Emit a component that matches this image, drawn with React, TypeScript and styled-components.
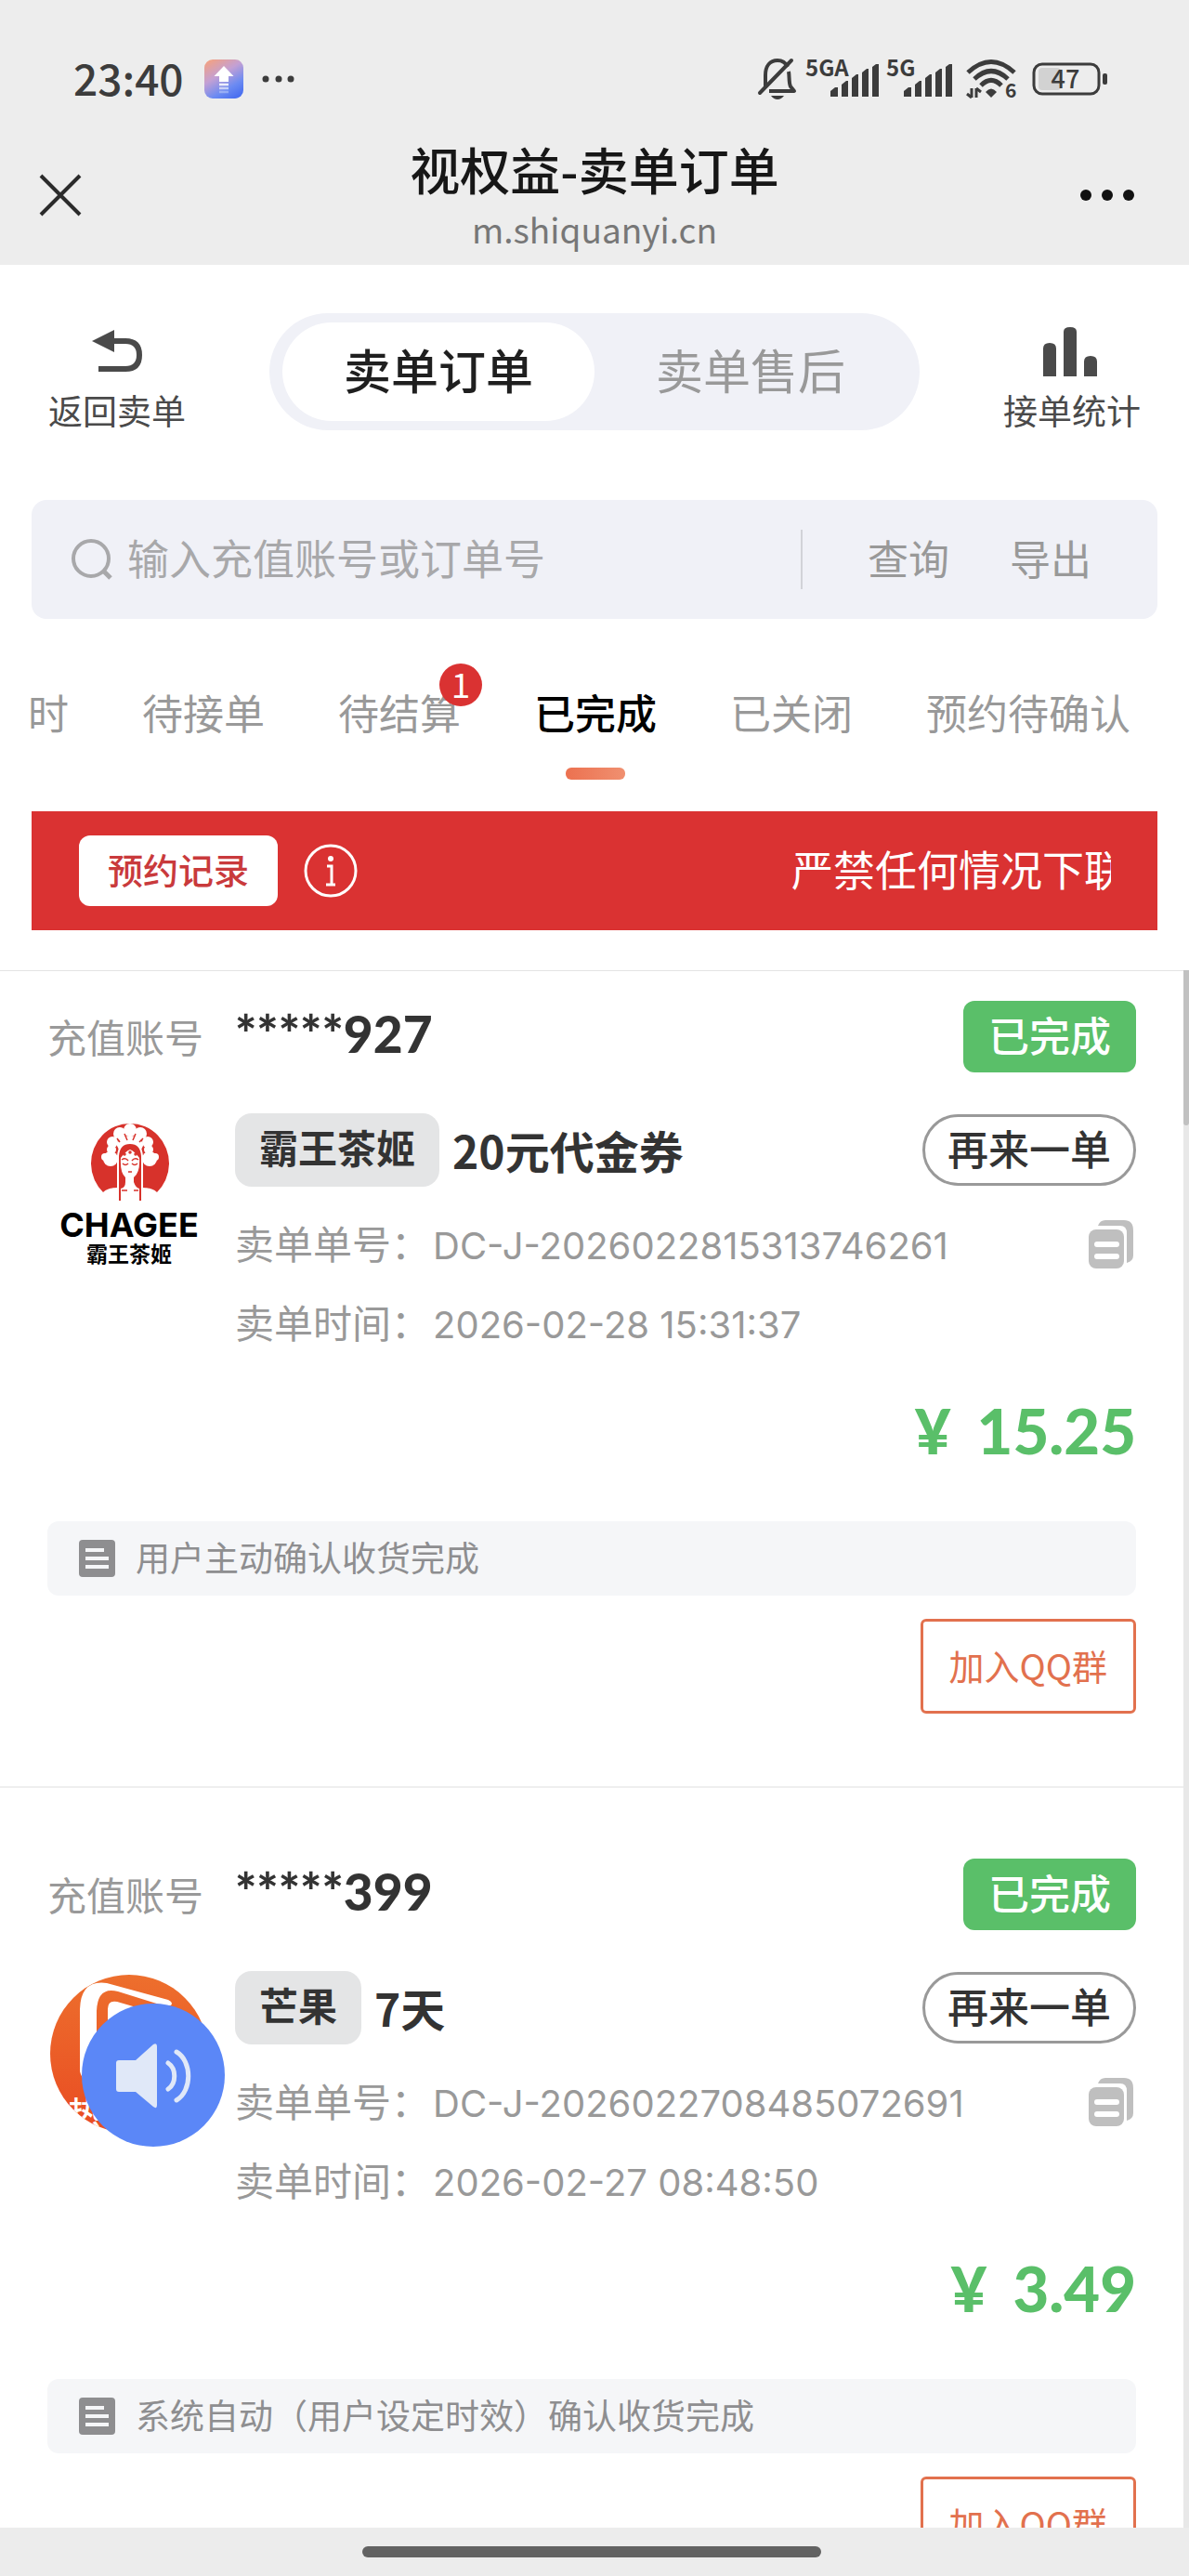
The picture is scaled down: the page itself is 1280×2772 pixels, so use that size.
import React from "react";
import styled, { createGlobalStyle, css } from "styled-components";

const GlobalStyle = createGlobalStyle`
  *, *::before, *::after { box-sizing: border-box; }
  body {
    margin: 0;
    background: #fff;
    font-family: "Noto Sans CJK SC", "Noto Sans", sans-serif;
    color: #333;
  }
  button, input {
    margin: 0;
    padding: 0;
    border: 0;
    background: none;
    font: inherit;
    color: inherit;
  }
  button { cursor: pointer; white-space: nowrap; }
  svg { display: block; flex: none; overflow: visible; }
`;

const Screen = styled.div`
  display: flex;
  flex-direction: column;
  height: 100vh;
  overflow: hidden;
`;

/* ---------- system bar and browser title ---------- */

const TopArea = styled.header`
  flex: none;
  background: #ededed;
`;

const StatusBar = styled.div`
  display: flex;
  align-items: center;
  justify-content: space-between;
  padding: 58px 87px 22px 79px;
  height: 134px;
`;

const StatusGroup = styled.div<{ $gap: number }>`
  display: flex;
  align-items: center;
  gap: ${(p) => p.$gap}px;
`;

const Clock = styled.span`
  padding-bottom: 4px;
  font-size: 46px;
  line-height: 54px;
  font-weight: 500;
  color: #3c3c3c;
`;

const NavBar = styled.div`
  display: grid;
  grid-template-columns: 1fr auto 1fr;
  align-items: center;
  height: 151px;
  padding: 0 42px;
`;

const NavButton = styled.button<{ $end?: boolean }>`
  justify-self: ${(p) => (p.$end ? "end" : "start")};
  padding-right: 16px;
`;

const Titles = styled.div`
  text-align: center;
`;

const Title = styled.h1`
  margin: 0;
  font-size: 54px;
  line-height: 72px;
  font-weight: 500;
  color: #171717;
`;

const Domain = styled.div`
  font-size: 37px;
  line-height: 56px;
  color: #777;
`;

/* ---------- toolbar ---------- */

const Toolbar = styled.div`
  display: flex;
  align-items: flex-end;
  justify-content: space-between;
  flex: none;
  padding: 52px 52px 0;
`;

const ToolButton = styled.button`
  display: flex;
  flex-direction: column;
  align-items: center;
  gap: 16px;
  font-size: 37px;
  line-height: 44px;
  color: #4a4a4a;
`;

const Segmented = styled.div`
  display: flex;
  flex: 0 1 700px;
  height: 126px;
  padding: 10px 14px;
  border-radius: 63px;
  background: #f0f1f7;
`;

const Segment = styled.button<{ $active?: boolean }>`
  flex: 1;
  padding-bottom: 6px;
  border-radius: 53px;
  font-size: 51px;
  color: #999;
  ${(p) =>
    p.$active &&
    css`
      background: #fff;
      color: #1f1f1f;
      font-weight: 500;
    `}
`;

/* ---------- search ---------- */

const SearchBox = styled.form`
  display: flex;
  align-items: center;
  flex: none;
  height: 128px;
  margin: 75px 34px 0;
  padding: 0 71px 0 43px;
  border-radius: 16px;
  background: #f0f1f7;
  font-size: 44px;
  line-height: 64px;
  color: #999;
`;

const SearchInput = styled.input`
  flex: 1;
  min-width: 0;
  height: 64px;
  margin-left: 16px;
  padding-bottom: 4px;
  outline: none;
  font-size: 45px;
  color: #333;
  &::placeholder { color: #a8a8aa; opacity: 1; }
`;

const SearchDivider = styled.span`
  width: 2px;
  height: 64px;
  margin-right: 70px;
  background: #d2d3d8;
`;

const SearchAction = styled.button`
  padding-bottom: 4px;
  & + & { margin-left: 65px; }
`;

/* ---------- order state tabs ---------- */

const Tabs = styled.nav`
  display: flex;
  flex: none;
  gap: 79px;
  padding: 68px 0 34px 30px;
  overflow: hidden;
`;

const Tab = styled.button<{ $active?: boolean }>`
  display: flex;
  flex: none;
  flex-direction: column;
  align-items: center;
  gap: 28px;
  font-size: 44px;
  line-height: 64px;
  color: #999;
  &::after {
    content: "";
    width: 64px;
    height: 13px;
    margin: 0 -10px;
    border-radius: 6px;
  }
  ${(p) =>
    p.$active &&
    css`
      color: #000;
      font-weight: 500;
      &::after { background: linear-gradient(90deg, #ec7150, #f09070); }
    `}
`;

const TabLabel = styled.span`
  position: relative;
`;

const Badge = styled.span`
  position: absolute;
  top: -20px;
  right: -23px;
  width: 46px;
  height: 46px;
  border-radius: 50%;
  background: #da3232;
  color: #fff;
  font-size: 37px;
  line-height: 42px;
  text-align: center;
`;

/* ---------- notice ---------- */

const Notice = styled.div`
  display: flex;
  align-items: center;
  flex: none;
  height: 128px;
  margin: 0 34px 43px;
  padding: 0 50px 0 51px;
  background: #da3232;
  color: #fff;
`;

const RecordButton = styled.button`
  height: 76px;
  padding: 0 31px 5px;
  margin-right: 28px;
  border-radius: 12px;
  background: #fff;
  color: #c93a3c;
  font-size: 38px;
  font-weight: 500;
`;

const Marquee = styled.div`
  display: flex;
  flex: 1;
  justify-content: flex-end;
  overflow: hidden;
`;

const MarqueeText = styled.span`
  width: 344px;
  overflow: hidden;
  white-space: nowrap;
  font-size: 45px;
  line-height: 64px;
  padding-bottom: 4px;
`;

/* ---------- orders ---------- */

const ListArea = styled.main`
  display: flex;
  flex: 1;
  min-height: 0;
  overflow: hidden;
`;

const Orders = styled.div`
  flex: 1;
  min-width: 0;
  border-top: 1px solid #e4e4e4;
`;

const ScrollTrack = styled.div`
  width: 6px;
  background: #e8e8e8;
`;

const ScrollThumb = styled.div`
  height: 167px;
  border-radius: 0 0 3px 3px;
  background: #c1c1c1;
`;

const Card = styled.article`
  padding: 76px 51px 78px;
  border-bottom: 2px solid #efefef;
  &:first-child { padding-top: 32px; }
`;

const CardHead = styled.div`
  display: flex;
  align-items: flex-start;
  justify-content: space-between;
  height: 77px;
`;

const AccountLine = styled.div`
  display: flex;
  align-items: baseline;
  padding-top: 2px;
`;

const AccountLabel = styled.span`
  width: 202px;
  font-size: 42px;
  line-height: 72px;
  color: #999;
`;

const Account = styled.strong`
  font-family: Lato, "Noto Sans CJK SC", sans-serif;
  font-size: 55px;
  line-height: 64px;
  font-weight: 900;
`;

const StateTag = styled.span`
  height: 77px;
  padding: 0 27px;
  border-radius: 12px;
  background: #5abf69;
  color: #fff;
  font-size: 44px;
  line-height: 72px;
  font-weight: 500;
`;

const CardBody = styled.div`
  display: grid;
  grid-template-columns: 174px 1fr;
  gap: 28px;
  margin-top: 44px;
`;

const LogoBox = styled.div`
  padding-top: 3px;
`;

const GoodsRow = styled.div`
  display: flex;
  align-items: center;
  height: 79px;
  margin-bottom: 19px;
`;

const BrandTag = styled.span`
  height: 79px;
  padding: 0 26px;
  border-radius: 18px;
  background: #e4e5e6;
  font-size: 42px;
  line-height: 72px;
  font-weight: 700;
`;

const GoodsName = styled.h2`
  flex: 1;
  margin: 0 0 0 14px;
  font-size: 48px;
  line-height: 79px;
  font-weight: 700;
`;

const AgainButton = styled.button`
  height: 77px;
  padding: 0 24px 5px;
  border: 3px solid #999;
  border-radius: 39px;
  font-size: 44px;
  line-height: 64px;
  font-weight: 500;
`;

const Detail = styled.div`
  display: flex;
  align-items: center;
  justify-content: space-between;
  height: 85px;
  padding-right: 3px;
  font-size: 42px;
  line-height: 85px;
  color: #999;
`;

const DetailValue = styled.span`
  margin-left: 3px;
  font-family: Inter, "Noto Sans CJK SC", sans-serif;
  font-size: 40px;
`;

const Price = styled.div`
  display: flex;
  justify-content: flex-end;
  gap: 28px;
  margin-top: 33px;
  font-family: Lato, "Noto Sans CJK SC", sans-serif;
  font-size: 67px;
  line-height: 80px;
  font-weight: 900;
  color: #5abf69;
`;

const Remark = styled.div`
  display: flex;
  align-items: center;
  gap: 22px;
  height: 80px;
  margin-top: 58px;
  padding: 0 34px;
  border-radius: 12px;
  background: #f5f6f8;
  font-size: 37px;
  line-height: 76px;
  color: #8e8e90;
`;

const RemarkText = styled.span`
  padding-bottom: 4px;
`;

const CardFoot = styled.div`
  display: flex;
  justify-content: flex-end;
  margin-top: 25px;
`;

const GroupButton = styled.button`
  height: 102px;
  padding: 0 28px 4px;
  border: 3px solid #e2714e;
  border-radius: 6px;
  color: #e2714e;
  font-size: 38px;
`;

/* ---------- overlay and gesture bar ---------- */

const VoiceButton = styled.button`
  position: fixed;
  left: 88px;
  bottom: 462px;
  width: 154px;
  height: 154px;
  border-radius: 50%;
  background: #5b87f7;
`;

const GestureBar = styled.footer`
  display: flex;
  align-items: center;
  justify-content: center;
  flex: none;
  height: 52px;
  padding-right: 6px;
  background: #ececec;
  &::after {
    content: "";
    width: 494px;
    height: 12px;
    border-radius: 6px;
    background: #626262;
  }
`;

/* ---------- drawings ---------- */

const AppIcon = () => (
  <svg width="42" height="42" viewBox="0 0 42 42" aria-hidden="true">
    <defs>
      <linearGradient id="appBg" x1="0.15" y1="0" x2="0.75" y2="1">
        <stop offset="0" stopColor="#f2a184" />
        <stop offset="0.4" stopColor="#c3a0d4" />
        <stop offset="0.75" stopColor="#6c8bf2" />
        <stop offset="1" stopColor="#4a70f0" />
      </linearGradient>
    </defs>
    <rect width="42" height="42" rx="9" fill="url(#appBg)" />
    <path d="M21 7l10.500 11h-5.500v6h-10v-6h-5.500z" fill="#fff" />
    <path d="M16 27h10" stroke="#fff" strokeWidth="2.500" opacity="0.850" />
    <path d="M16 31h10" stroke="#fff" strokeWidth="2.500" opacity="0.600" />
    <path d="M16 35h10" stroke="#fff" strokeWidth="2.500" opacity="0.300" />
  </svg>
);

const SmallDots = () => (
  <svg width="36" height="8" viewBox="2 0 36 8" fill="#3c3c3c" aria-hidden="true">
    <circle cx="4" cy="4" r="3.500" />
    <circle cx="18" cy="4" r="3.500" />
    <circle cx="31" cy="4" r="3.500" />
  </svg>
);

const MuteIcon = () => (
  <svg width="44" height="46" viewBox="0 0 44 46" fill="none" stroke="#3c3c3c" strokeWidth="4" aria-hidden="true">
    <path d="M9 31V19C9 9 14 3 22 3C27 3 31 6 33 10" />
    <path d="M34 15C35 20 34 27 36 31L40 36H13" strokeLinejoin="round" />
    <path d="M37 3L3 38" strokeLinecap="round" />
    <path d="M15 41H29Q26 45 22 45Q18 45 15 41Z" fill="#3c3c3c" stroke="none" />
  </svg>
);

const Signal = ({ label, width }: { label: string; width: number }) => (
  <svg width={width} height="42" viewBox={`0 0 ${width} 42`} fill="#3c3c3c" role="img" aria-label={`${label} 信号`}>
    <text x="0" y="18" fontSize="24" fontWeight="700" fontFamily="'Noto Sans CJK SC', sans-serif">
      {label}
    </text>
    <path
      transform={`translate(${width - 52} 5)`}
      d="M0 35V29L5 25H8V35zM12 35V22L17 18H19V35zM23 35V15L28 11H30V35zM34 35V9L39 5H41V35zM45 35V3L49 0H52V35z"
    />
  </svg>
);

const WifiIcon = () => (
  <svg width="54" height="44" viewBox="0 0 54 44" fill="none" stroke="#3c3c3c" strokeWidth="5" aria-hidden="true">
    <path d="M2 15Q27-8 52 15" />
    <path d="M9 22Q27 5 45 22" />
    <path d="M16 29Q27 18 38 29" />
    <path d="M21 36Q27 29 33 36L27 42Z" fill="#3c3c3c" stroke="none" />
    <path d="M6 32V42M1 38L6 42M11 42V32M16 36L11 32" strokeWidth="3" />
    <text x="42" y="42" fontSize="21" fontWeight="700" fill="#3c3c3c" stroke="none" fontFamily="'Noto Sans CJK SC', sans-serif">
      6
    </text>
  </svg>
);

const BatteryIcon = () => (
  <svg width="82" height="36" viewBox="0 0 82 36" role="img" aria-label="电量 47">
    <rect x="7" y="6" width="24" height="24" rx="4" fill="#d2d2d2" />
    <rect x="2" y="2" width="70" height="32" rx="9" fill="none" stroke="#3c3c3c" strokeWidth="3" />
    <rect x="76" y="12" width="5" height="12" rx="2" fill="#3c3c3c" />
    <text x="36" y="28" textAnchor="middle" fontSize="27" fontWeight="500" fill="#3c3c3c" fontFamily="'Noto Sans CJK SC', sans-serif">
      47
    </text>
  </svg>
);

const CloseIcon = () => (
  <svg width="46" height="46" viewBox="0 0 46 46" stroke="#2b2b2b" strokeWidth="4" aria-hidden="true">
    <path d="M2 2L44 44M44 2L2 44" />
  </svg>
);

const MoreIcon = () => (
  <svg width="60" height="14" viewBox="0 0 60 14" fill="#111" aria-hidden="true">
    <circle cx="7" cy="7" r="6" />
    <circle cx="30" cy="7" r="6" />
    <circle cx="53" cy="7" r="6" />
  </svg>
);

const ReturnIcon = () => (
  <svg width="60" height="56" viewBox="0 0 60 56" aria-hidden="true">
    <path d="M3 20L27 8V32Z" fill="#4a4a4a" />
    <path d="M25 20H39Q54 20 54 35Q54 50 39 50H10" fill="none" stroke="#4a4a4a" strokeWidth="6" />
  </svg>
);

const ChartIcon = () => (
  <svg width="60" height="56" viewBox="2 -2 60 56" fill="#4a4a4a" aria-hidden="true">
    <path d="M1 56V26Q1 20 8 20Q15 20 15 26V56zM23 56V8Q23 3 30 3Q37 3 37 8V56zM45 56V40Q45 34 52 34Q59 34 59 40V56z" />
  </svg>
);

const SearchIcon = () => (
  <svg width="44" height="44" viewBox="0 0 44 44" fill="none" stroke="#a8a8aa" strokeWidth="4" aria-hidden="true">
    <circle cx="21" cy="21" r="19" />
    <path d="M34 34L42 42" strokeWidth="5" />
  </svg>
);

const InfoIcon = () => (
  <svg width="58" height="58" viewBox="0 0 58 58" fill="none" stroke="#fff" strokeWidth="3" aria-hidden="true">
    <circle cx="29" cy="29" r="27" />
    <circle cx="29" cy="16" r="3" fill="#fff" stroke="none" />
    <path d="M25 24H30V44M24 44H34" />
  </svg>
);

const CopyIcon = () => (
  <svg width="48" height="52" viewBox="0 0 48 52" aria-hidden="true">
    <path d="M10 6Q12 0 18 0H38Q48 0 48 11V38Q48 44 41 46V14Q41 6 34 6Z" fill="#bfbfbf" />
    <rect x="0" y="10" width="38" height="42" rx="8" fill="#bfbfbf" />
    <path d="M9 26H30M9 39H30" stroke="#fff" strokeWidth="6" strokeLinecap="round" />
  </svg>
);

const NoteIcon = () => (
  <svg width="39" height="40" viewBox="0 0 39 40" aria-hidden="true">
    <rect width="39" height="40" rx="4" fill="#8e8e90" />
    <path d="M7 11H27M7 20H32M7 29H32" stroke="#f5f6f8" strokeWidth="4" />
  </svg>
);

const SpeakerIcon = () => (
  <svg width="154" height="154" viewBox="0 0 154 154" aria-hidden="true">
    <path d="M37 64Q37 61 40 61H58L77 44Q81 42 81 46V109Q81 114 77 111L58 95H40Q37 95 37 92Z" fill="#e0e8f8" />
    <path d="M93 64C102 70 102 86 93 92M102 52C119 62 119 94 102 104" fill="none" stroke="#e0e8f8" strokeWidth="5" strokeLinecap="round" />
  </svg>
);

const ChageeLogo = () => (
  <svg width="174" height="174" viewBox="0 0 174 174" role="img" aria-label="CHAGEE">
    <path d="M60 82A42 43 0 1 1 118 82Q112 76 102 78V92H76V78Q66 76 60 82Z" fill="#d7322b" />
    <g fill="#fff">
      <circle cx="89" cy="15" r="7" />
      <circle cx="78" cy="19" r="7" />
      <circle cx="100" cy="19" r="7" />
      <circle cx="70" cy="28" r="6" />
      <circle cx="108" cy="28" r="6" />
      <circle cx="69" cy="36" r="5" />
      <circle cx="109" cy="36" r="5" />
      <circle cx="68" cy="46" r="8" />
      <circle cx="110" cy="46" r="8" />
      <circle cx="62" cy="44" r="4" />
      <circle cx="116" cy="44" r="4" />
      <path d="M74 30Q89 12 104 30L101 36Q89 22 77 36Z" />
    </g>
    <path d="M76 92V43Q77 29 89 29Q101 29 102 43V92Z" fill="#d7322b" stroke="#fff" strokeWidth="2" />
    <path d="M79 45Q84 38 89 36Q94 38 99 45Q100 61 93 66V71Q95 77 99 78V94H79V78Q84 77 84 71V66Q78 61 79 45Z" fill="#fff" />
    <path d="M66 79Q71 77 75 77V94H66ZM103 77Q108 77 113 80V94H103Z" fill="#fff" />
    <g fill="none" stroke="#d7322b" strokeWidth="1.500">
      <path d="M80 47Q84 44 87 48M91 48Q94 44 98 47M81 51Q84 54 87 51M91 51Q94 54 97 51M87 60H91M80 80H86M93 80H98" />
      <circle cx="83" cy="41" r="1" />
      <circle cx="89" cy="39" r="1" />
      <circle cx="95" cy="41" r="1" />
      <path d="M75 24L78 28M83 19L86 26M95 19L92 26M103 24L99 28" />
    </g>
    <g fill="#000" textAnchor="middle">
      <text x="88" y="130" fontSize="36" fontWeight="700" fontFamily="Inter, sans-serif">
        CHAGEE
      </text>
      <text x="88" y="157" fontSize="23" fontWeight="700" fontFamily="'Noto Sans CJK SC', sans-serif">
        霸王茶姬
      </text>
    </g>
  </svg>
);

const MangoLogo = () => (
  <svg width="174" height="174" viewBox="0 0 174 174" role="img" aria-label="芒果">
    <defs>
      <linearGradient id="mangoBg" x1="0" y1="0" x2="0" y2="1">
        <stop offset="0" stopColor="#ed6f2d" />
        <stop offset="1" stopColor="#e94b22" />
      </linearGradient>
      <clipPath id="mangoClip">
        <circle cx="88" cy="86" r="85" />
      </clipPath>
    </defs>
    <g clipPath="url(#mangoClip)">
      <rect width="174" height="174" fill="url(#mangoBg)" />
      <path d="M35 105V38Q36 6 64 10L130 28Q136 31 133 34H124L76 19Q54 13 53 40V120Q38 118 35 105Z" fill="#fff" />
      <path d="M65 110V38Q65 28 75 30L130 46V110Z" fill="#fff" />
      <text x="22" y="164" fontSize="36" fontWeight="500" fill="#fff" fontFamily="'Noto Sans CJK SC', sans-serif">
        热
      </text>
    </g>
  </svg>
);

/* ---------- data ---------- */

type Order = {
  account: string;
  brand: string;
  goods: string;
  no: string;
  time: string;
  price: string;
  remark: string;
  logo: React.ReactNode;
};

const tabs = [
  { label: "时" },
  { label: "待接单" },
  { label: "待结算", count: 1 },
  { label: "已完成", active: true },
  { label: "已关闭" },
  { label: "预约待确认" },
];

const orders: Order[] = [
  {
    account: "*****927",
    brand: "霸王茶姬",
    goods: "20元代金券",
    no: "DC-J-2026022815313746261",
    time: "2026-02-28 15:31:37",
    price: "15.25",
    remark: "用户主动确认收货完成",
    logo: <ChageeLogo />,
  },
  {
    account: "*****399",
    brand: "芒果",
    goods: "7天",
    no: "DC-J-2026022708485072691",
    time: "2026-02-27 08:48:50",
    price: "3.49",
    remark: "系统自动（用户设定时效）确认收货完成",
    logo: <MangoLogo />,
  },
];

const OrderCard = ({ order }: { order: Order }) => (
  <Card>
    <CardHead>
      <AccountLine>
        <AccountLabel>充值账号</AccountLabel>
        <Account>{order.account}</Account>
      </AccountLine>
      <StateTag>已完成</StateTag>
    </CardHead>
    <CardBody>
      <LogoBox>{order.logo}</LogoBox>
      <div>
        <GoodsRow>
          <BrandTag>{order.brand}</BrandTag>
          <GoodsName>{order.goods}</GoodsName>
          <AgainButton type="button">再来一单</AgainButton>
        </GoodsRow>
        <Detail>
          <span>
            卖单单号：<DetailValue>{order.no}</DetailValue>
          </span>
          <button type="button" aria-label="复制">
            <CopyIcon />
          </button>
        </Detail>
        <Detail>
          <span>
            卖单时间：<DetailValue>{order.time}</DetailValue>
          </span>
        </Detail>
      </div>
    </CardBody>
    <Price>
      <span>¥</span>
      <span>{order.price}</span>
    </Price>
    <Remark>
      <NoteIcon />
      <RemarkText>{order.remark}</RemarkText>
    </Remark>
    <CardFoot>
      <GroupButton type="button">加入QQ群</GroupButton>
    </CardFoot>
  </Card>
);

export default function App() {
  return (
    <Screen>
      <GlobalStyle />
      <TopArea>
        <StatusBar>
          <StatusGroup $gap={22}>
            <Clock>23:40</Clock>
            <AppIcon />
            <SmallDots />
          </StatusGroup>
          <StatusGroup $gap={15}>
            <StatusGroup $gap={8}>
              <MuteIcon />
              <Signal label="5GA" width={79} />
              <Signal label="5G" width={71} />
            </StatusGroup>
            <StatusGroup $gap={17}>
              <WifiIcon />
              <BatteryIcon />
            </StatusGroup>
          </StatusGroup>
        </StatusBar>
        <NavBar>
          <NavButton type="button" aria-label="关闭">
            <CloseIcon />
          </NavButton>
          <Titles>
            <Title>视权益-卖单订单</Title>
            <Domain>m.shiquanyi.cn</Domain>
          </Titles>
          <NavButton type="button" aria-label="更多" $end>
            <MoreIcon />
          </NavButton>
        </NavBar>
      </TopArea>

      <Toolbar>
        <ToolButton type="button">
          <ReturnIcon />
          返回卖单
        </ToolButton>
        <Segmented>
          <Segment type="button" $active>
            卖单订单
          </Segment>
          <Segment type="button">卖单售后</Segment>
        </Segmented>
        <ToolButton type="button">
          <ChartIcon />
          接单统计
        </ToolButton>
      </Toolbar>

      <SearchBox onSubmit={(e) => e.preventDefault()}>
        <SearchIcon />
        <SearchInput type="text" aria-label="搜索订单" placeholder="输入充值账号或订单号" />
        <SearchDivider />
        <SearchAction type="submit">查询</SearchAction>
        <SearchAction type="button">导出</SearchAction>
      </SearchBox>

      <Tabs>
        {tabs.map((tab) => (
          <Tab key={tab.label} type="button" $active={tab.active}>
            <TabLabel>
              {tab.label}
              {tab.count && <Badge>{tab.count}</Badge>}
            </TabLabel>
          </Tab>
        ))}
      </Tabs>

      <Notice>
        <RecordButton type="button">预约记录</RecordButton>
        <InfoIcon />
        <Marquee>
          <MarqueeText>严禁任何情况下联</MarqueeText>
        </Marquee>
      </Notice>

      <ListArea>
        <Orders>
          {orders.map((order) => (
            <OrderCard key={order.no} order={order} />
          ))}
        </Orders>
        <ScrollTrack>
          <ScrollThumb />
        </ScrollTrack>
      </ListArea>

      <VoiceButton type="button" aria-label="语音播报">
        <SpeakerIcon />
      </VoiceButton>
      <GestureBar />
    </Screen>
  );
}
